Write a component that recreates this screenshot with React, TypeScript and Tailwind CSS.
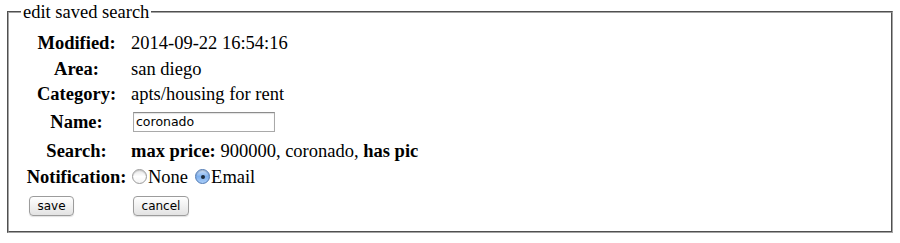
import React from "react";

const serif = "font-['Liberation_Serif','Times_New_Roman',serif]";
const ui = "font-['DejaVu_Sans','Lucida_Grande',sans-serif]";

function Row({ h, label, children }: { h: string; label?: React.ReactNode; children?: React.ReactNode }) {
  return (
    <div className={`flex items-center ${h}`}>
      <div className="w-[101px] shrink-0 whitespace-nowrap text-center font-bold">{label}</div>
      <div className="ml-[4px] flex items-center whitespace-nowrap">{children}</div>
    </div>
  );
}

function Radio({ checked }: { checked?: boolean }) {
  return checked ? (
    <span className="mx-[1px] inline-flex h-[15px] w-[15px] items-center justify-center rounded-full border border-[#4d78b3] bg-gradient-to-b from-[#d2e4fb] via-[#7eb0ee] to-[#a9cdf8] shadow-[inset_0_1px_1px_rgba(0,0,0,0.2)]">
      <span className="h-[4px] w-[4px] rounded-full bg-[#1c2a3a]" />
    </span>
  ) : (
    <span className="mx-[1px] inline-block h-[15px] w-[15px] rounded-full border border-[#9a9a9a] bg-gradient-to-b from-[#e6e6e6] via-[#ffffff] to-[#f4f4f4] shadow-[inset_0_1px_1px_rgba(0,0,0,0.15)]" />
  );
}

function Btn({ children, w }: { children: React.ReactNode; w: string }) {
  return (
    <span
      className={`${ui} inline-flex h-[20px] ${w} items-center justify-center rounded-[4px] border border-[#9c9c9c] bg-gradient-to-b from-[#ffffff] to-[#e3e3e3] text-[12px] leading-none text-black shadow-[0_1px_1px_rgba(0,0,0,0.12)]`}
    >
      {children}
    </span>
  );
}

export default function App() {
  return (
    <div className={`${serif} bg-white text-[18.5px] text-black`}>
      <fieldset className="mx-[7px] mt-[2px] border-2 border-[#a4a4a4] [border-style:groove] pb-[11px] pl-[17px] pt-[8px]">
        <legend className="-ml-[5px] px-[2px] leading-[20px]">edit saved search</legend>
        <div className="flex flex-col leading-[20px]">
          <Row h="h-[26px]" label="Modified:">2014-09-22 16:54:16</Row>
          <Row h="h-[25px]" label="Area:">san diego</Row>
          <Row h="h-[26px]" label="Category:">apts/housing for rent</Row>
          <Row h="h-[30px]" label="Name:">
            <span
              className={`${ui} ml-[2px] flex h-[20px] w-[142px] items-center border border-[#a9a9a9] border-t-[#8c8c8c] bg-white pl-[2px] text-[12.5px] leading-none shadow-[inset_0_1px_1px_rgba(0,0,0,0.12)]`}
            >
              coronado
            </span>
          </Row>
          <Row h="h-[27px]" label="Search:">
            <span>
              <b>max price:</b> 900000, coronado, <b>has pic</b>
            </span>
          </Row>
          <Row h="h-[25px]" label="Notification:">
            <span className="flex items-center">
              <Radio />
              <span>None</span>
              <span className="ml-[6px]" />
              <Radio checked />
              <span>Email</span>
            </span>
          </Row>
          <div className="flex h-[31px] items-center">
            <div className="w-[101px] shrink-0 pl-[3px]">
              <Btn w="w-[45px]">save</Btn>
            </div>
            <div className="ml-[6px]">
              <Btn w="w-[56px]">cancel</Btn>
            </div>
          </div>
        </div>
      </fieldset>
    </div>
  );
}
